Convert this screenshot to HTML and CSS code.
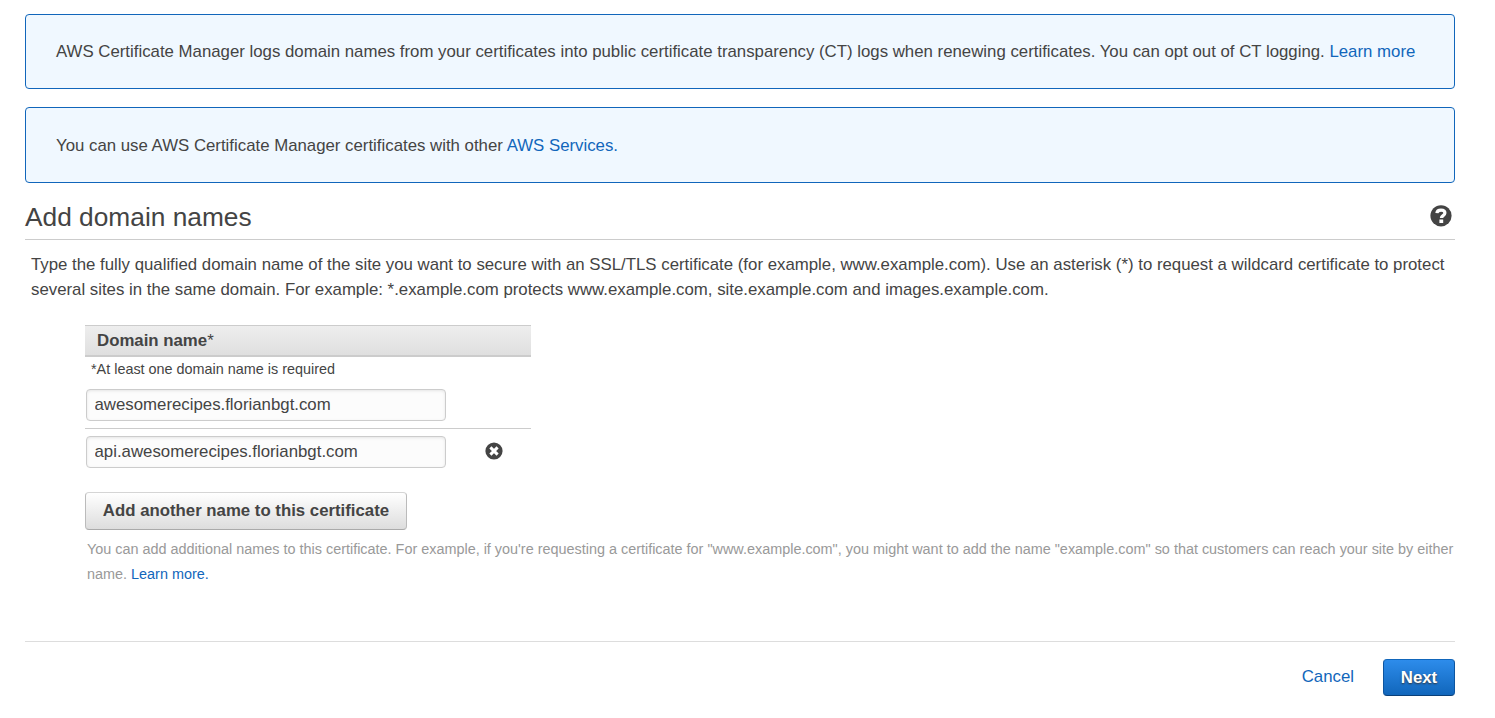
FILE: index.html
```html
<!DOCTYPE html>
<html lang="en">
<head>
<meta charset="utf-8">
<title>Add domain names</title>
<link rel="stylesheet" href="styles.css">
</head>
<body>
<main class="page">
  <div class="notice"><span>AWS Certificate Manager logs domain names from your certificates into public certificate transparency (CT) logs when renewing certificates. You can opt out of CT logging. <a href="#">Learn more</a></span></div>
  <div class="notice notice-services"><span>You can use AWS Certificate Manager certificates with other <a href="#">AWS Services.</a></span></div>
  <header class="heading">
    <h1>Add domain names</h1>
    <svg class="help" viewBox="0 0 22 22" aria-label="Help"><circle cx="11" cy="10.800" r="10.600" fill="#444"/><path d="M6.900 8.200C7.100 5.800 8.700 5.200 11 5.200c2.400 0 3.900 1 3.900 2.900 0 2.600-3.500 2.500-3.500 5" fill="none" stroke="#fff" stroke-width="3.200"/><rect x="9.400" y="14.500" width="3.800" height="3.500" fill="#fff"/></svg>
  </header>
  <p class="intro">Type the fully qualified domain name of the site you want to secure with an SSL/TLS certificate (for example, www.example.com). Use an asterisk (*) to request a wildcard certificate to protect<br>several sites in the same domain. For example: *.example.com protects www.example.com, site.example.com and images.example.com.</p>
  <section class="domains">
    <div class="table-head"><b>Domain name</b>*</div>
    <p class="required">*At least one domain name is required</p>
    <div class="row first"><input class="field" type="text" value="awesomerecipes.florianbgt.com"></div>
    <div class="row"><input class="field" type="text" value="api.awesomerecipes.florianbgt.com">
      <svg class="remove" viewBox="0 0 18 18" aria-label="Remove"><circle cx="9" cy="9" r="8.600" fill="#444"/><path d="M5.400 5.400l7.200 7.200M12.600 5.400l-7.200 7.200" stroke="#fff" stroke-width="3"/></svg>
    </div>
    <button class="button add">Add another name to this certificate</button>
    <p class="hint">You can add additional names to this certificate. For example, if you're requesting a certificate for "www.example.com", you might want to add the name "example.com" so that customers can reach your site by either<br>name. <a href="#">Learn more.</a></p>
  </section>
  <footer class="actions"><a href="#">Cancel</a><button class="button next">Next</button></footer>
</main>
</body>
</html>
```
FILE: styles.css
```css
* { box-sizing: border-box; }
body { margin: 0; background: #fff; color: #444; font: 16.815px/25px "Liberation Sans", Arial, sans-serif; }
p, h1 { margin: 0; font-weight: normal; }
a { color: #1166bb; text-decoration: none; }
.page { width: 1430px; margin: 14px 0 0 25px; white-space: nowrap; }
.notice { height: 75px; padding: 24px 30px; border: 1px solid #1166bb; border-radius: 4px; background: #f0f8ff; }
.notice-services { height: 76px; margin-top: 18px; padding-top: 25px; }
.heading { display: flex; justify-content: space-between; height: 57px; border-bottom: 1px solid #ccc; }
.heading h1 { padding-top: 18px; font-size: 26.3px; line-height: 32px; }
.help { width: 22px; height: 22px; margin: 22px 3px 0 0; }
.intro { padding: 12px 0 0 6px; }
.domains { margin: 23px 0 0 60px; }
.table-head { width: 446px; height: 32px; padding-left: 12px; line-height: 29px; border-top: 1px solid #ccc; border-bottom: 2px solid #ccc; background: linear-gradient(#eee, #dfdfdf); }
.required { padding-left: 6px; font-size: 14.4px; line-height: 25px; }
.row { display: flex; align-items: center; width: 446px; height: 46px; padding-left: 1px; }
.first { height: 47px; border-bottom: 1px solid #ccc; }
.field { width: 360px; height: 32px; padding: 0 8px 0 7.5px; color: #444; font: 16.815px "Liberation Sans", Arial, sans-serif; background: #fcfcfc; border: 1px solid #ccc; border-radius: 4px; box-shadow: inset 0 1px 3px #e5e5e5; outline: 0; }
.remove { width: 18px; height: 18px; margin: 0 0 2px 39px; }
.button { display: block; padding: 0; font: bold 16.8px "Liberation Sans", Arial, sans-serif; border: 1px solid; border-radius: 4px; }
.add { width: 322px; height: 38px; margin-top: 17px; color: #444; background: linear-gradient(#fff, #ddd); border-color: #d5d5d5 #bbb #aaa; }
.hint { padding: 7px 0 0 2px; color: #999; font-size: 14.41px; }
.actions { display: flex; justify-content: flex-end; margin-top: 54px; padding-top: 17px; border-top: 1px solid #ddd; line-height: 35px; }
.next { width: 72px; height: 37px; margin-left: 29px; color: #fff; background: linear-gradient(#2d8ceb, #1166bb); border-color: #1166bb #0d55a0 #0a3f78; text-shadow: 0 1px 2px #333; }
```
